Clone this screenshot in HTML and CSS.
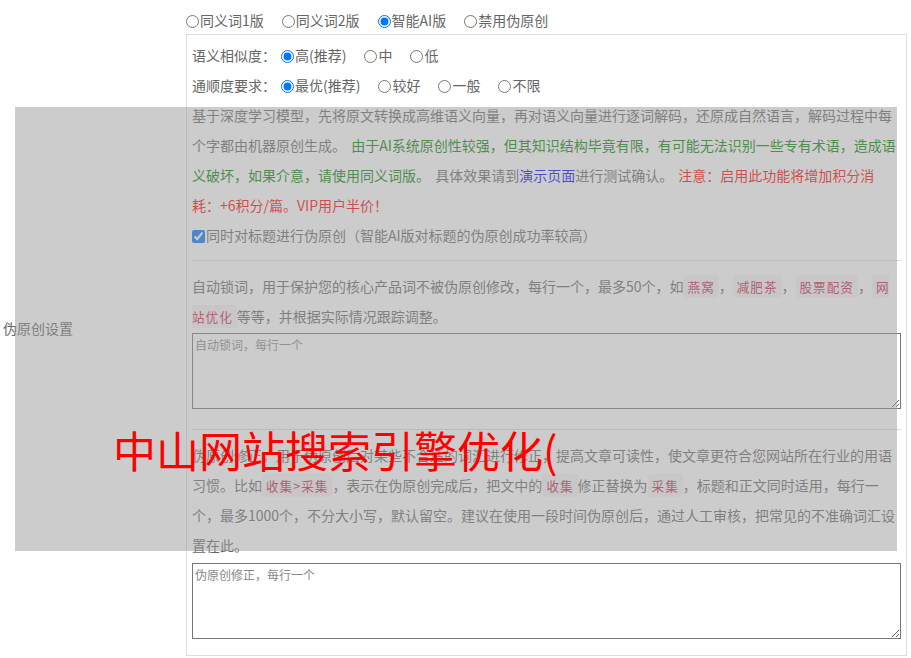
FILE: index.html
```html
<!DOCTYPE html>
<html lang="zh-CN">
<head>
<meta charset="utf-8">
<title>伪原创设置</title>
<link rel="stylesheet" href="styles.css">
</head>
<body>
<div class="page">
  <div class="label-col"><span>伪原创设置</span></div>
  <div class="main-col">
    <div class="modes">
      <label class="opt"><input type="radio" name="mode">同义词1版</label><label class="opt"><input type="radio" name="mode">同义词2版</label><label class="opt"><input type="radio" name="mode" checked>智能AI版</label><label class="opt"><input type="radio" name="mode">禁用伪原创</label>
    </div>
    <div class="box">
      <div class="row"><span class="row-label">语义相似度：</span><label class="opt"><input type="radio" name="sim" checked>高(推荐)</label><label class="opt"><input type="radio" name="sim">中</label><label class="opt"><input type="radio" name="sim">低</label></div>
      <div class="row"><span class="row-label">通顺度要求：</span><label class="opt"><input type="radio" name="flu" checked>最优(推荐)</label><label class="opt"><input type="radio" name="flu">较好</label><label class="opt"><input type="radio" name="flu">一般</label><label class="opt"><input type="radio" name="flu">不限</label></div>
      <p class="desc desc-spaced">基于深度学习模型，先将原文转换成高维语义向量，再对语义向量进行逐词解码，还原成自然语言，解码过程中每个字都由机器原创生成。 <span class="green">由于AI系统原创性较强，但其知识结构毕竟有限，有可能无法识别一些专有术语，造成语义破坏，如果介意，请使用同义词版。</span> 具体效果请到<a class="link" href="#">演示页面</a>进行测试确认。 <span class="red">注意：启用此功能将增加积分消耗：+6积分/篇。VIP用户半价！</span></p>
      <div class="row"><label class="check"><input type="checkbox" checked>同时对标题进行伪原创（智能AI版对标题的伪原创成功率较高）</label></div>
      <hr>
      <p class="desc">自动锁词，用于保护您的核心产品词不被伪原创修改，每行一个，最多50个，如<code>燕窝</code>，<code>减肥茶</code>，<code>股票配资</code>，<code>网站优化</code>等等，并根据实际情况跟踪调整。</p>
      <textarea class="ta ta-first" placeholder="自动锁词，每行一个"></textarea>
      <hr>
      <p class="desc">伪原创修正，用于伪原创后对某些不合适的词汇进行修正，提高文章可读性，使文章更符合您网站所在行业的用语习惯。比如<code>收集&gt;采集</code>，表示在伪原创完成后，把文中的<code>收集</code>修正替换为<code>采集</code>，标题和正文同时适用，每行一个，最多1000个，不分大小写，默认留空。建议在使用一段时间伪原创后，通过人工审核，把常见的不准确词汇设置在此。</p>
      <textarea class="ta" placeholder="伪原创修正，每行一个"></textarea>
    </div>
  </div>
</div>
<div class="mask"></div>
<div class="ad">中山网站搜索引擎优化(</div>
</body>
</html>
```
FILE: styles.css
```css
body {
  margin: 0;
  font-family: "Noto Sans CJK SC", "Microsoft YaHei", sans-serif;
  font-size: 14px;
  color: #666;
  text-spacing-trim: space-all;
}

.page {
  display: grid;
  grid-template-columns: 186px 721px;
}

.label-col {
  display: flex;
  align-items: center;
  padding-left: 3px;
}

.modes {
  padding-top: 5px;
  height: 29px;
  line-height: 30px;
}

.opt {
  margin-right: 18px;
  white-space: nowrap;
}

.opt input,
.check input {
  margin: 0 1px 0 0;
  width: 13px;
  height: 13px;
  vertical-align: -2px;
}

.box {
  border: 1px solid #ddd;
  padding: 5px 5px 6px;
}

.row {
  line-height: 30px;
  white-space: nowrap;
}

.row-label {
  margin-right: 5px;
}

.desc {
  margin: 0;
  line-height: 30px;
}

.desc-spaced {
  word-spacing: 2px;
}

.green {
  color: #008000;
}

.red {
  color: #ff0000;
}

.link {
  color: #0000ff;
  text-decoration: none;
}

code {
  font-family: "Noto Sans CJK SC", sans-serif;
  font-size: 12.6px;
  line-height: 1;
  letter-spacing: 1px;
  padding: 2px 4px;
  color: #c7254e;
  background: #f9f2f4;
  border-radius: 4px;
}

hr {
  border: 0;
  border-top: 1px solid #ddd;
  height: 0;
  margin: 10px 0;
}

.ta {
  display: block;
  box-sizing: border-box;
  width: 100%;
  height: 76px;
  margin: 2px 0 10px;
  padding: 2px;
  border: 1px solid #767676;
  font-family: "Noto Sans CJK SC", sans-serif;
  font-size: 12px;
  resize: vertical;
}

.ta::placeholder {
  color: #888;
}

.ta-first {
  margin-bottom: 20px;
}

.ta:last-child {
  margin-top: 3px;
}

.mask {
  position: absolute;
  left: 15px;
  top: 107px;
  width: 882px;
  height: 444px;
  background: rgba(153, 153, 153, 0.5);
}

.ad {
  position: absolute;
  left: 113px;
  top: 428px;
  font-family: "Noto Sans CJK SC", sans-serif;
  font-size: 43px;
  line-height: 1;
  color: #ff0000;
  white-space: nowrap;
}
```
